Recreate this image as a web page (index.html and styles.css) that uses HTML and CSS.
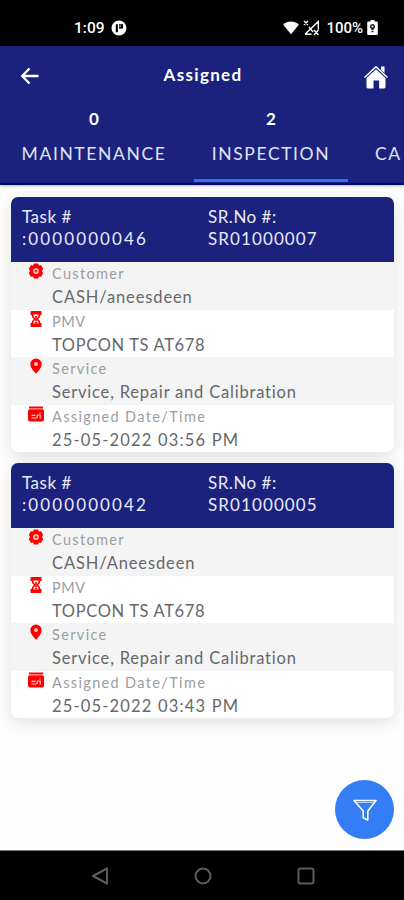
FILE: index.html
```html
<!DOCTYPE html>
<html lang="en">
<head>
    <meta charset="UTF-8">
    <meta name="viewport" content="width=device-width, initial-scale=1.0">
    <title>Assigned</title>
    <link rel="stylesheet" href="styles.css">
</head>
<body>
    <svg class="sprite" aria-hidden="true">
        <symbol id="gear" viewBox="0 0 16 16">
            <path fill="red" stroke="red" stroke-width="1.5" stroke-linejoin="round" d="M6.300 1.300h3.400l.7 2.100 2.400-.4 1.500 2.800L13 8l1.300 2.200-1.500 2.800-2.400-.4-.7 2.100H6.300l-.7-2.100-2.400.4-1.500-2.800L3 8 1.700 5.800 3.200 3l2.400.4z"/>
            <circle cx="8" cy="8" r="2.200" fill="#ff3030" stroke="#ffd8d8" stroke-width="1.300"/>
        </symbol>
        <symbol id="hourglass" viewBox="0 0 16 16">
            <path fill="red" d="M3.500 0h9a1 1 0 0 1 1 1v3h-1.300c0 2-.8 3-2.200 4 1.400 1 2.200 2 2.200 4h1.300v3a1 1 0 0 1-1 1h-9a1 1 0 0 1-1-1v-3h1.300C3.800 10 4.600 9 6 8 4.600 7 3.800 6 3.800 4H2.500V1a1 1 0 0 1 1-1z"/>
            <path fill="#fff" d="M5.500 3.500h5c0 2-.7 3-2 4v1c1.300 1 2 2.200 2 4h-5c0-1.800.7-3 2-4v-1c-1.300-1-2-2-2-4z"/>
            <path fill="red" d="M6.300 12.500 8 9.800l1.700 2.700zM7.200 5h1.600v5H7.200z"/>
        </symbol>
        <symbol id="pin" viewBox="0 0 16 16">
            <path fill="red" d="M8 .5a5.700 5.700 0 0 0-5.700 5.700C2.300 10.200 8 15.700 8 15.700s5.700-5.500 5.700-9.500A5.700 5.700 0 0 0 8 .5z"/>
            <circle cx="8" cy="6" r="2" fill="#fbb"/>
        </symbol>
        <symbol id="calendar" viewBox="0 0 16 16">
            <path fill="red" d="M1 .5h14v2.300H1z"/>
            <rect y="3" width="16" height="12.500" rx="2" fill="red"/>
            <path stroke="#ffb8b8" stroke-width=".8" d="M1 3h14"/>
            <path stroke="#ffd0d0" stroke-width="1.200" fill="none" d="M3.500 9.300h4M3.500 12h5M9.200 12V8.700M9.200 9h3v3.500M12 7.500V6.500"/>
        </symbol>
    </svg>

    <div class="status-bar">
        <div class="status-left">
            <span class="clock">1:09</span>
            <svg width="16" height="16" viewBox="0 0 16 16">
                <circle cx="8" cy="8" r="7.500" fill="#fff"/>
                <path fill="#000" d="M4.800 4.200h2.100v8H4.800zM8 4.200h4v4.400H8z"/>
                <path fill="#fff" d="M8.600 5.600h1v1.300h-1z"/>
            </svg>
        </div>
        <div class="status-right">
            <svg width="16" height="14" viewBox="0 0 16 14">
                <path fill="#fff" d="M.2 3.800C4.500-.6 11.500-.6 15.800 3.800L8 13.300z"/>
            </svg>
            <svg class="signal" width="17" height="16" viewBox="0 0 17 16">
                <path stroke="#fff" stroke-width="1.400" fill="none" d="M1 1l4 4M5 1 1 5M2 14.300 15.300 1.500v8M2 14.300h6.500M6 7l4 5M11 10l4.500 5M15.500 10 11 15"/>
            </svg>
            <span class="battery-text">100%</span>
            <svg width="11" height="15" viewBox="0 0 11 15">
                <path fill="#fff" d="M3.500 0h4v1.500h2A1.300 1.300 0 0 1 10.800 3v10.500A1.300 1.300 0 0 1 9.500 15h-8A1.300 1.300 0 0 1 .2 13.500V3a1.300 1.300 0 0 1 1.300-1.500h2z"/>
                <path fill="#222" d="M5.500 4a2.500 2.500 0 0 1 2.600 2.500c0 1.400-.8 2-1.600 2.800v1H4.500v-1C3.700 8.500 2.900 7.900 2.900 6.500A2.500 2.500 0 0 1 5.500 4zM4.500 11h2v1.200h-2z"/>
                <circle cx="5.500" cy="6.500" r="1" fill="#fff"/>
            </svg>
        </div>
    </div>

    <header class="header">
        <div class="app-bar">
            <svg class="back" width="20" height="18" viewBox="0 0 20 18">
                <path stroke="#fff" stroke-width="2.300" fill="none" d="M18.500 9H2.500M9.500 1.500 2.200 9l7.300 7.500"/>
            </svg>
            <h1>Assigned</h1>
            <svg class="home" width="26" height="24" viewBox="0 0 26 24">
                <path fill="#fff" d="M18 1.500h3.500v6.500L18 4.800z"/>
                <path stroke="#fff" stroke-width="1.500" fill="none" d="M1.500 12.500 13 1.700l11.500 10.800"/>
                <path fill="#fff" d="M13 4.300 22.500 13v9a1.400 1.400 0 0 1-1.400 1.400h-5V15.500H10.500v7.900H5A1.400 1.400 0 0 1 3.500 22v-9z"/>
            </svg>
        </div>
        <nav class="tabs">
            <div class="tab maintenance">
                <b>0</b>
                <span>MAINTENANCE</span>
            </div>
            <div class="tab inspection active">
                <b>2</b>
                <span>INSPECTION</span>
            </div>
            <div class="tab calibration">
                <span>CA</span>
            </div>
        </nav>
    </header>

    <main class="task-list">
        <article class="card">
            <div class="card-header">
                <div class="task-no">Task #<br><span>:0000000046</span></div>
                <div class="sr-no">SR.No #:<br><span>SR01000007</span></div>
            </div>
            <div class="row">
                <svg><use href="#gear"/></svg>
                <div><p class="label">Customer</p><p class="value customer">CASH/aneesdeen</p></div>
            </div>
            <div class="row">
                <svg><use href="#hourglass"/></svg>
                <div><p class="label pmv">PMV</p><p class="value model">TOPCON TS AT678</p></div>
            </div>
            <div class="row">
                <svg><use href="#pin"/></svg>
                <div><p class="label">Service</p><p class="value service">Service, Repair and Calibration</p></div>
            </div>
            <div class="row">
                <svg><use href="#calendar"/></svg>
                <div><p class="label">Assigned Date/Time</p><p class="value date">25-05-2022 03:56 PM</p></div>
            </div>
        </article>

        <article class="card">
            <div class="card-header">
                <div class="task-no">Task #<br><span>:0000000042</span></div>
                <div class="sr-no">SR.No #:<br><span>SR01000005</span></div>
            </div>
            <div class="row">
                <svg><use href="#gear"/></svg>
                <div><p class="label">Customer</p><p class="value customer">CASH/Aneesdeen</p></div>
            </div>
            <div class="row">
                <svg><use href="#hourglass"/></svg>
                <div><p class="label pmv">PMV</p><p class="value model">TOPCON TS AT678</p></div>
            </div>
            <div class="row">
                <svg><use href="#pin"/></svg>
                <div><p class="label">Service</p><p class="value service">Service, Repair and Calibration</p></div>
            </div>
            <div class="row">
                <svg><use href="#calendar"/></svg>
                <div><p class="label">Assigned Date/Time</p><p class="value date">25-05-2022 03:43 PM</p></div>
            </div>
        </article>
    </main>

    <button class="filter-button" aria-label="Filter">
        <svg width="26" height="24" viewBox="0 0 26 24">
            <path stroke="#fff" stroke-width="1.600" stroke-linejoin="round" fill="none" d="M2 2.500h22L15.800 13v9l-4.600-2.300V13z"/>
            <path stroke="#a9cbff" d="M4 4.500h18"/>
        </svg>
    </button>

    <div class="nav-bar">
        <svg width="18" height="18" viewBox="0 0 18 18"><path d="M16 1.500v15L2 9z"/></svg>
        <svg width="18" height="18" viewBox="0 0 18 18"><circle cx="9" cy="9" r="7.500"/></svg>
        <svg width="18" height="18" viewBox="0 0 18 18"><rect x="1.500" y="1.500" width="15" height="15" rx="2"/></svg>
    </div>
</body>
</html>
```
FILE: styles.css
```css
* {
    box-sizing: border-box;
}

body {
    margin: 0;
    height: 900px;
    display: flex;
    flex-direction: column;
    overflow: hidden;
    background: #fefefe;
    font-family: Lato, sans-serif;
}

p, h1 {
    margin: 0;
}

svg {
    display: block;
    flex-shrink: 0;
}

.sprite {
    position: absolute;
    width: 0;
    height: 0;
}

.status-bar {
    height: 46px;
    padding: 9px 26px 0 74px;
    background: #000;
    color: #fff;
    display: flex;
    justify-content: space-between;
    align-items: center;
    font: 500 15.5px Roboto, sans-serif;
}

.battery-text {
    font-size: 15px;
    margin-right: 4px;
}

.status-left,
.status-right {
    display: flex;
    align-items: center;
}

.status-left {
    gap: 6px;
}

.signal {
    margin: 0 6px 0 4px;
}

.header {
    height: 139px;
    background: #1b227e;
    color: #fff;
    border-bottom: 2px solid #06086c;
    box-shadow: 0 1px 3px rgba(0, 0, 0, 0.3);
}

.app-bar {
    height: 60px;
    padding: 0 15px 0 20px;
    display: grid;
    grid-template-columns: 26px 1fr 26px;
    align-items: center;
}

.app-bar h1 {
    font-size: 17px;
    letter-spacing: 1.3px;
    text-align: center;
    line-height: 20px;
    margin: 0 3px 3px 0;
}

.home {
    margin-top: 1px;
}

.tabs {
    display: flex;
    height: 77px;
    overflow: hidden;
}

.tab {
    flex-shrink: 0;
    display: flex;
    flex-direction: column;
    justify-content: flex-end;
    align-items: center;
    border-bottom: 3px solid transparent;
    padding-bottom: 13px;
    margin-bottom: 1px;
    font-size: 17.5px;
    line-height: 24px;
    letter-spacing: 1.6px;
    color: #e0e2f4;
}

.tab b {
    font-size: 17px;
    line-height: 24px;
    margin-bottom: 11px;
    letter-spacing: 0;
    color: #fff;
}

.maintenance {
    width: 188px;
    margin-right: 6px;
}

.inspection {
    width: 154px;
}

.calibration {
    padding-left: 27px;
}

.tab.active {
    border-color: #2f72e4;
}

.task-list {
    flex: 1;
    padding: 12px 10px 0 11px;
    display: flex;
    flex-direction: column;
    gap: 11px;
}

.card {
    height: 255px;
    border-radius: 7px;
    overflow: hidden;
    background: #fff;
    box-shadow: 0 5px 16px rgba(0, 0, 0, 0.12);
}

.card-header {
    height: 65px;
    padding: 9px 11px;
    display: grid;
    grid-template-columns: 186px 1fr;
    background: #1b227e;
    color: #e9eaf8;
    font-size: 17px;
    line-height: 22px;
    letter-spacing: 0.5px;
}

.task-no span {
    letter-spacing: 2.1px;
}

.sr-no span {
    letter-spacing: 1.1px;
}

.row {
    height: 47.5px;
    padding-left: 17px;
    display: flex;
    gap: 8px;
}

.row:nth-child(even) {
    background: #f4f4f4;
}

.row svg {
    width: 16px;
    height: 16px;
    margin-top: 1px;
}

.label {
    margin-top: 2px;
    font-size: 14.5px;
    line-height: 20px;
    letter-spacing: 1.35px;
    color: #9a9da1;
}

.label.pmv {
    letter-spacing: 0.5px;
}

.value {
    font-size: 16.5px;
    line-height: 24px;
    margin-top: 1px;
    color: #66676b;
    white-space: nowrap;
}

.customer {
    letter-spacing: 0.88px;
}

.model {
    letter-spacing: 0.65px;
}

.service {
    letter-spacing: 0.8px;
}

.date {
    letter-spacing: 1.18px;
}

.filter-button {
    position: fixed;
    left: 335px;
    top: 780px;
    width: 59px;
    height: 59px;
    border: none;
    border-radius: 50%;
    background: #347df5;
    display: flex;
    align-items: center;
    justify-content: center;
}

.nav-bar {
    height: 50px;
    background: #000;
    border-top: 1px solid #777;
    display: flex;
    justify-content: space-between;
    align-items: center;
    padding: 1px 89px 0 91px;
}

.nav-bar svg {
    fill: none;
    stroke: #5c5c5c;
    stroke-width: 2;
    stroke-linejoin: round;
}
```
